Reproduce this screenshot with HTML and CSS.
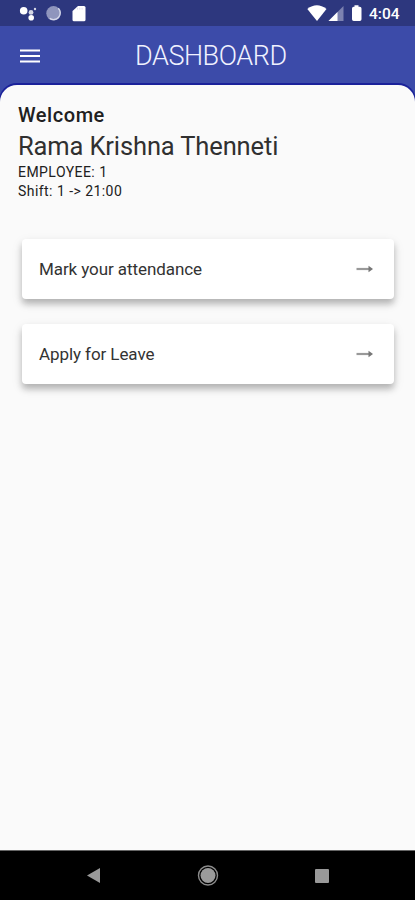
FILE: index.html
```html
<!DOCTYPE html>
<html lang="en">
<head>
<meta charset="utf-8">
<title>Dashboard</title>
<link rel="stylesheet" href="styles.css">
</head>
<body>
<div class="statusbar">
  <svg class="status-left" width="70" height="20" viewBox="19 4 70 20">
    <g fill="#fff">
      <circle cx="23.7" cy="10.7" r="3.8"/>
      <circle cx="31" cy="12.4" r="2.4" opacity=".8"/>
      <circle cx="35" cy="9" r="1.2" opacity=".8"/>
      <circle cx="31.2" cy="17.8" r="2.8"/>
    </g>
    <circle cx="53.5" cy="13.3" r="7.2" fill="#8f95bd"/>
    <path d="M58.3 8.2a6.7 6.7 0 0 1-8.6 10.2" fill="none" stroke="#d5d8ea" stroke-width="1.4"/>
    <path d="M78 6h6q1.500 0 1.500 1.500v12.200q0 1.500-1.500 1.500H74q-1.500 0-1.500-1.500V11z" fill="#fff"/>
    <path d="M77.500 7.800v1.800M79.800 7.800v1.800M82.100 7.800v1.800" stroke="#dcdeed" stroke-width=".9"/>
  </svg>
  <svg class="status-right" width="56" height="20" viewBox="307 4 56 20">
    <path d="M307.300 9Q316.800 1.500 326.500 9L317 21z" fill="#fff"/>
    <path d="M343.500 6v15H328.500z" fill="#7c82b0"/>
    <path d="M337.500 12v9h-9z" fill="#fff"/>
    <path d="M354.500 5.200h4v1.600h1.300q1.700 0 1.700 1.700v10.800q0 1.700-1.700 1.700h-6.100q-1.700 0-1.700-1.700V8.500q0-1.700 1.700-1.700h.8z" fill="#fff"/>
  </svg>
  <span class="clock">4:04</span>
</div>
<header class="appbar">
  <svg class="menu" width="20" height="16" viewBox="0 0 20 16"><path d="M0 2.500h20M0 8h20M0 13.500h20" stroke="#fff" stroke-width="2.200"/></svg>
  <h1 class="title">DASHBOARD</h1>
</header>
<main class="sheet">
  <p class="welcome">Welcome</p>
  <p class="name">Rama Krishna Thenneti</p>
  <p class="detail employee">EMPLOYEE: 1</p>
  <p class="detail shift">Shift: 1 -&gt; 21:00</p>
  <div class="cards">
    <div class="card">
      <span class="mark">Mark your attendance</span>
      <svg width="18" height="10" viewBox="0 0 18 10"><path d="M.5 5H13" stroke="#999" stroke-width="2.200"/><path d="M12.500 1.800L17 5l-4.500 3.200z" fill="#777"/></svg>
    </div>
    <div class="card">
      <span class="leave">Apply for Leave</span>
      <svg width="18" height="10" viewBox="0 0 18 10"><path d="M.5 5H13" stroke="#999" stroke-width="2.200"/><path d="M12.500 1.800L17 5l-4.500 3.200z" fill="#777"/></svg>
    </div>
  </div>
</main>
<nav class="navbar">
  <svg width="16" height="18" viewBox="0 0 16 18"><path d="M1 8.500L14 1v15z" fill="#999"/></svg>
  <svg width="22" height="22" viewBox="0 0 22 22"><circle cx="11" cy="10.500" r="9.500" fill="none" stroke="#8c8c8c" stroke-width="1.400"/><circle cx="11" cy="10.500" r="7.500" fill="#9b9b9b"/></svg>
  <svg width="14" height="14" viewBox="0 0 14 14"><rect width="14" height="14" rx="1" fill="#999"/></svg>
</nav>
</body>
</html>
```

FILE: styles.css
```css
* { box-sizing: border-box; }
body {
  margin: 0;
  height: 900px;
  display: flex;
  flex-direction: column;
  overflow: hidden;
  background: #3c4ba9;
  font-family: Roboto, "Liberation Sans", sans-serif;
  color: #202020;
}
p, h1 { margin: 0; white-space: nowrap; }
svg { display: block; flex: none; }
.statusbar {
  height: 26px;
  flex: none;
  display: flex;
  padding: 4px 0 0 19px;
  background: #2d377e;
}
.status-right { margin-left: 218px; }
.clock {
  margin-left: 6px;
  font-size: 15.5px;
  line-height: 20px;
  font-weight: 500;
  color: #fff;
}
.appbar {
  height: 59px;
  flex: none;
  display: flex;
  align-items: center;
  padding-left: 20px;
}
.title {
  margin-left: 95px;
  font-size: 27px;
  line-height: 32px;
  font-weight: 300;
  letter-spacing: -.45px;
  color: #f0f2ff;
}
.sheet {
  flex: 1;
  padding: 17px 21px 0 18px;
  background: #fafafa;
  border-radius: 17px 17px 0 0;
  box-shadow: 0 -1px 0 1px #1a219a;
  clip-path: inset(-2px 0 0 0);
}
.welcome { font-size: 20px; line-height: 26px; font-weight: 500; letter-spacing: .55px; }
.name { margin-top: 2px; font-size: 25.5px; line-height: 33px; font-weight: 400; letter-spacing: -.13px; color: #303030; }
.detail { font-size: 14px; line-height: 19px; letter-spacing: .45px; }
.cards {
  display: flex;
  flex-direction: column;
  gap: 25px;
  margin: 38px 0 0 4px;
}
.card {
  height: 60px;
  display: flex;
  align-items: center;
  justify-content: space-between;
  padding: 0 20px 0 17px;
  border-radius: 4px;
  background: #fff;
  box-shadow: 0 5px 6px rgba(0, 0, 0, .22), 0 4px 12px rgba(0, 0, 0, .1);
  font-size: 17px;
  letter-spacing: -.08px;
  color: #333;
}
.navbar {
  position: relative;
  height: 50px;
  flex: none;
  display: flex;
  align-items: center;
  padding-left: 86px;
  border-top: 1px solid #666;
  background: #000;
}
.navbar svg:nth-child(2) { margin-left: 95px; }
.navbar svg:nth-child(3) { margin-left: 96px; }
```
